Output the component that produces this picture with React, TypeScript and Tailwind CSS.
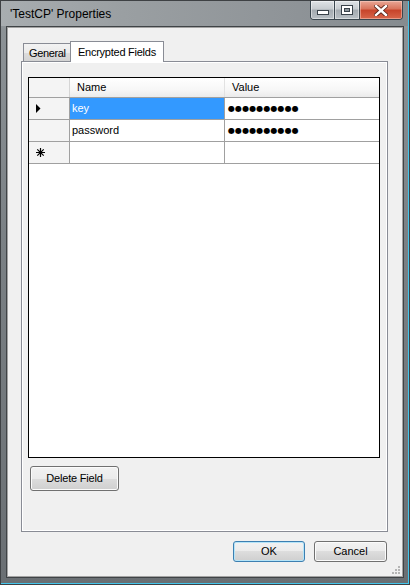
import React from 'react';

const btn =
  'flex items-center justify-center rounded-[3px] border text-[11px] leading-none text-black bg-[linear-gradient(to_bottom,#f2f2f2_0%,#ebebeb_50%,#dddddd_50%,#cfcfcf_100%)]';

function CaptionButtons() {
  return (
    <div className="ml-auto mr-[5px] flex h-[19px] self-start overflow-hidden rounded-b-[4px] border border-t-0 border-[#3a464e]">
      <div className="flex w-[24px] items-end justify-center border-r border-[#3a464e] pb-[4px] bg-[linear-gradient(to_bottom,#dfe3e6_0%,#c6cbcf_45%,#a3aab0_50%,#b9c0c5_100%)] shadow-[inset_0_0_0_1px_rgba(255,255,255,0.45)]">
        <svg width="12" height="5">
          <rect x="0.5" y="0.5" width="11" height="4" fill="#fff" stroke="#39424a" />
        </svg>
      </div>
      <div className="flex w-[25px] items-center justify-center border-r border-[#3a464e] bg-[linear-gradient(to_bottom,#dfe3e6_0%,#c6cbcf_45%,#a3aab0_50%,#b9c0c5_100%)] shadow-[inset_0_0_0_1px_rgba(255,255,255,0.45)]">
        <svg width="12" height="10">
          <rect x="0.5" y="0.5" width="11" height="9" fill="#fff" stroke="#39424a" />
          <rect x="3.5" y="3.5" width="5" height="3" fill="#8d969c" stroke="#39424a" />
        </svg>
      </div>
      <div className="flex w-[42px] items-center justify-center bg-[linear-gradient(to_bottom,#e9a796_0%,#d8735a_45%,#c7432a_50%,#d8664a_100%)] shadow-[inset_0_0_0_1px_rgba(255,220,210,0.45)]">
        <svg width="14" height="11" viewBox="0 0 14 11">
          <path d="M2 1 L12 10 M12 1 L2 10" stroke="#5a2419" strokeWidth="4.2" strokeLinecap="square" />
          <path d="M2 1 L12 10 M12 1 L2 10" stroke="#fff" strokeWidth="2.4" strokeLinecap="square" />
        </svg>
      </div>
    </div>
  );
}

function Triangle() {
  return (
    <svg width="5" height="9" viewBox="0 0 5 9">
      <path d="M0 0 L4.5 4.5 L0 9 Z" fill="#000" />
    </svg>
  );
}

function Asterisk() {
  return (
    <svg width="9" height="9" viewBox="0 0 9 9">
      <path d="M4.5 0 V9 M0 4.5 H9 M1.3 1.3 L7.7 7.7 M7.7 1.3 L1.3 7.7" stroke="#000" strokeWidth="1.2" />
    </svg>
  );
}

const dots = '●●●●●●●●●●';

export default function App() {
  const rows = [
    { name: 'key', value: dots, selected: true },
    { name: 'password', value: dots, selected: false },
  ];

  return (
    <div className="h-[585px] w-[410px] border border-[#3e4144] font-['Liberation_Sans',Arial,sans-serif]">
      <div className="flex h-full flex-col border-b border-r border-[#43c6ec] bg-[linear-gradient(to_bottom,#a3a8ac_0%,#8c9296_5%,#7b8185_40%,#6a6f73_100%)]">
        {/* title bar */}
        <div className="flex h-[25px] bg-[linear-gradient(to_right,#a8adb0_0%,#9a9fa2_30%,#8f9498_70%,#858b8f_100%)]">
          <div className="pl-[9px] pt-[6px] text-[12px] leading-[14px] text-black">'TestCP' Properties</div>
          <CaptionButtons />
        </div>

        {/* frame + client */}
        <div className="flex flex-1 pb-[5px] pl-[5px] pr-[4px]">
          <div className="flex flex-1 border border-[#3f4346]">
            <div className="relative flex flex-1 flex-col border border-[#a3a3a3] bg-[#f0f0f0] pl-[13px] pt-[13px]">
              {/* tabs */}
              <div className="flex h-[20px] items-end pl-[2px]">
                <div className="flex h-[18px] w-[48px] items-center border border-b-0 border-[#898c95] bg-[linear-gradient(to_bottom,#f3f3f3_0%,#ebebeb_50%,#dddddd_50%,#d3d3d3_100%)] pl-[5px] pt-[2px] text-[11px] tracking-[-0.35px] text-black">
                  General
                </div>
                <div className="relative z-10 -mb-px -ml-px flex h-[21px] w-[94px] items-center border border-b-0 border-[#898c95] bg-white pl-[7px] text-[11px] tracking-[-0.25px] text-black">
                  Encrypted Fields
                </div>
              </div>

              {/* panel */}
              <div className="h-[471px] w-[367px] border border-[#898c95]">
                <div className="flex h-full flex-col border border-white pl-[5px] pt-[14px]">
                  {/* grid */}
                  <div className="flex h-[381px] w-[352px] flex-col border border-black bg-white text-[11px]">
                    <div className="flex h-[20px] border-b border-[#a0a0a0] bg-[linear-gradient(to_bottom,#ffffff_0%,#f7f7f7_60%,#ebebeb_100%)]">
                      <div className="w-[41px] border-r border-[#d5d5d5] bg-[#f4f4f4]" />
                      <div className="flex w-[155px] items-center border-r border-[#e2e2e2] pl-[7px] text-black">Name</div>
                      <div className="flex w-[154px] items-center pl-[7px] text-black">Value</div>
                    </div>
                    {rows.map((r) => (
                      <div key={r.name} className="flex h-[22px] border-b border-[#a0a0a0]">
                        <div className="flex w-[41px] items-center border-r border-[#a0a0a0] bg-[#f4f4f4] pl-[7px]">
                          {r.selected && <Triangle />}
                        </div>
                        <div
                          className={`flex w-[155px] items-center border-r border-[#a0a0a0] pl-[2px] ${
                            r.selected ? 'bg-[#3399ff] text-white' : 'text-black'
                          }`}
                        >
                          {r.name}
                        </div>
                        <div className="flex w-[154px] items-center pl-[3px] font-['DejaVu_Sans',sans-serif] text-[8px] tracking-[0.1px] text-black">
                          {r.value}
                        </div>
                      </div>
                    ))}
                    <div className="flex h-[22px] border-b border-[#a0a0a0]">
                      <div className="flex w-[41px] items-center border-r border-[#a0a0a0] bg-[#f4f4f4] pl-[7px]">
                        <Asterisk />
                      </div>
                      <div className="w-[155px] border-r border-[#a0a0a0]" />
                      <div className="w-[154px]" />
                    </div>
                  </div>

                  <div className="ml-[2px] mt-[8px]">
                    <button className={`${btn} h-[25px] w-[89px] border-[#707070] tracking-[-0.2px] shadow-[inset_0_0_0_1px_#fbfbfb]`}>
                      Delete Field
                    </button>
                  </div>
                </div>
              </div>

              {/* dialog buttons */}
              <div className="mt-[9px] flex justify-end gap-[9px] pr-[15px]">
                <button className={`${btn} h-[21px] w-[72px] border-[#3c7fb1] shadow-[inset_0_0_0_1px_#b5e4f8]`}>OK</button>
                <button className={`${btn} h-[21px] w-[73px] border-[#707070] shadow-[inset_0_0_0_1px_#fbfbfb]`}>Cancel</button>
              </div>

              {/* size grip */}
              <svg className="absolute bottom-[1px] right-[1px]" width="10" height="10" viewBox="0 0 10 10">
                <rect x="7" y="1" width="2" height="2" fill="#b5b5b5" />
                <rect x="4" y="4" width="2" height="2" fill="#b5b5b5" />
                <rect x="7" y="4" width="2" height="2" fill="#b5b5b5" />
                <rect x="1" y="7" width="2" height="2" fill="#b5b5b5" />
                <rect x="4" y="7" width="2" height="2" fill="#b5b5b5" />
                <rect x="7" y="7" width="2" height="2" fill="#b5b5b5" />
              </svg>
            </div>
          </div>
        </div>
      </div>
    </div>
  );
}
